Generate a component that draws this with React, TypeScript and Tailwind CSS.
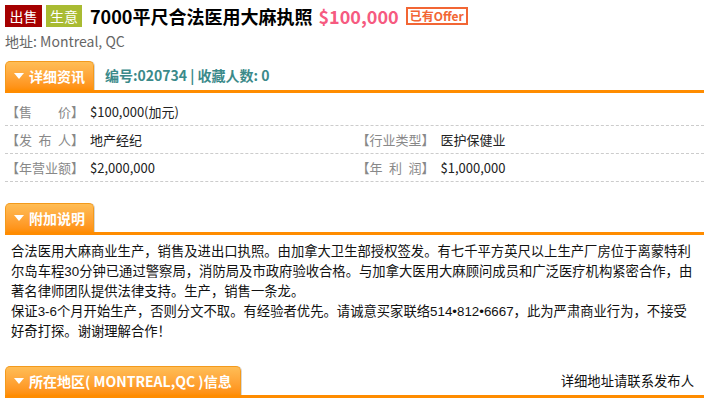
import React from 'react'

const font = { fontFamily: '"Noto Sans CJK SC", "DejaVu Sans", sans-serif' }
const bodyFont = { fontFamily: '"Liberation Sans", "Noto Sans CJK SC", sans-serif' }

const Caret = () => (
  <svg width="10" height="6" viewBox="0 0 10 6" className="shrink-0">
    <path d="M0 0 L10 0 L5 6 Z" fill="#fff" />
  </svg>
)

const TabBar: React.FC<{ title: string; children?: React.ReactNode }> = ({ title, children }) => (
  <div className="flex items-end border-b-[3px] border-[#ff8c00]">
    <div className="h-[29px] px-[8px] flex items-center gap-[5px] rounded-t-[5px] border border-b-0 border-[#f39a1c] bg-gradient-to-b from-[#ffbd55] to-[#ff8e05] text-white font-bold text-[14px] shadow-[1px_0_0_#d8d8d8]">
      <Caret />
      <span>{title}</span>
    </div>
    {children}
  </div>
)

const Label: React.FC<{ text: string }> = ({ text }) => (
  <span className="text-[#888] w-[84px] shrink-0 whitespace-pre">【{text}】</span>
)

const rows: [string, string, string?, string?][] = [
  ['售　　价', '$100,000(加元)'],
  ['发\u2002布\u2002人', '地产经纪', '行业类型', '医护保健业'],
  ['年营业额', '$2,000,000', '年\u2002利\u2002润', '$1,000,000'],
]

export default function App() {
  return (
    <div className="w-[709px] h-[401px] bg-white overflow-hidden px-[5px] pt-[5px] text-[#222]" style={font}>
      <div className="flex items-center h-[22px]">
        <span className="bg-[#a50000] text-white text-[14px] h-[22px] w-[37px] flex items-center justify-center">出售</span>
        <span className="ml-[4px] bg-[#a9bb32] text-white text-[14px] h-[22px] w-[36px] flex items-center justify-center">生意</span>
        <span className="ml-[8px] font-bold text-[18px] text-black">7000平尺合法医用大麻执照</span>
        <span className="ml-[6px] font-bold text-[18px] text-[#f65a80]">$100,000</span>
        <span className="ml-[7px] border-2 border-[#f26634] text-[#f26634] font-bold text-[12px] h-[18px] px-[2px] flex items-center leading-none">已有Offer</span>
      </div>
      <div className="mt-[6px] text-[14px] text-[#666] leading-[16px]">地址: Montreal, QC</div>

      <div className="mt-[12px]">
        <TabBar title="详细资讯">
          <div className="pl-[11px] h-[29px] flex items-center font-bold text-[14px] text-[#3b8a8a]">编号:020734 | 收藏人数: 0</div>
        </TabBar>
      </div>

      <div className="pt-[5px] text-[13px]">
        {rows.map((r, i) => (
          <div key={i} className="grid grid-cols-2 h-[28px] border-b border-dashed border-[#ccc]">
            <div className="flex items-center pl-[1px]">
              <Label text={r[0]} />
              <span>{r[1]}</span>
            </div>
            {r[2] && (
              <div className="flex items-center pl-[2px]">
                <Label text={r[2]} />
                <span>{r[3]}</span>
              </div>
            )}
          </div>
        ))}
      </div>

      <div className="mt-[21px]">
        <TabBar title="附加说明" />
      </div>
      <div className="px-[6px] pt-[7px] text-[13.33px] leading-[20px] text-[#111]" style={bodyFont}>
        <p>合法医用大麻商业生产，销售及进出口执照。由加拿大卫生部授权签发。有七千平方英尺以上生产厂房位于离蒙特利尔岛车程30分钟已通过警察局，消防局及市政府验收合格。与加拿大医用大麻顾问成员和广泛医疗机构紧密合作，由著名律师团队提供法律支持。生产，销售一条龙。</p>
        <p>保证3-6个月开始生产，否则分文不取。有经验者优先。请诚意买家联络514•812•6667，此为严肃商业行为，不接受好奇打探。谢谢理解合作！</p>
      </div>

      <div className="mt-[24px]">
        <TabBar title="所在地区( MONTREAL,QC )信息">
          <div className="ml-auto pr-[10px] h-[29px] flex items-center text-[13.33px] text-[#111]">详细地址请联系发布人</div>
        </TabBar>
      </div>
    </div>
  )
}
